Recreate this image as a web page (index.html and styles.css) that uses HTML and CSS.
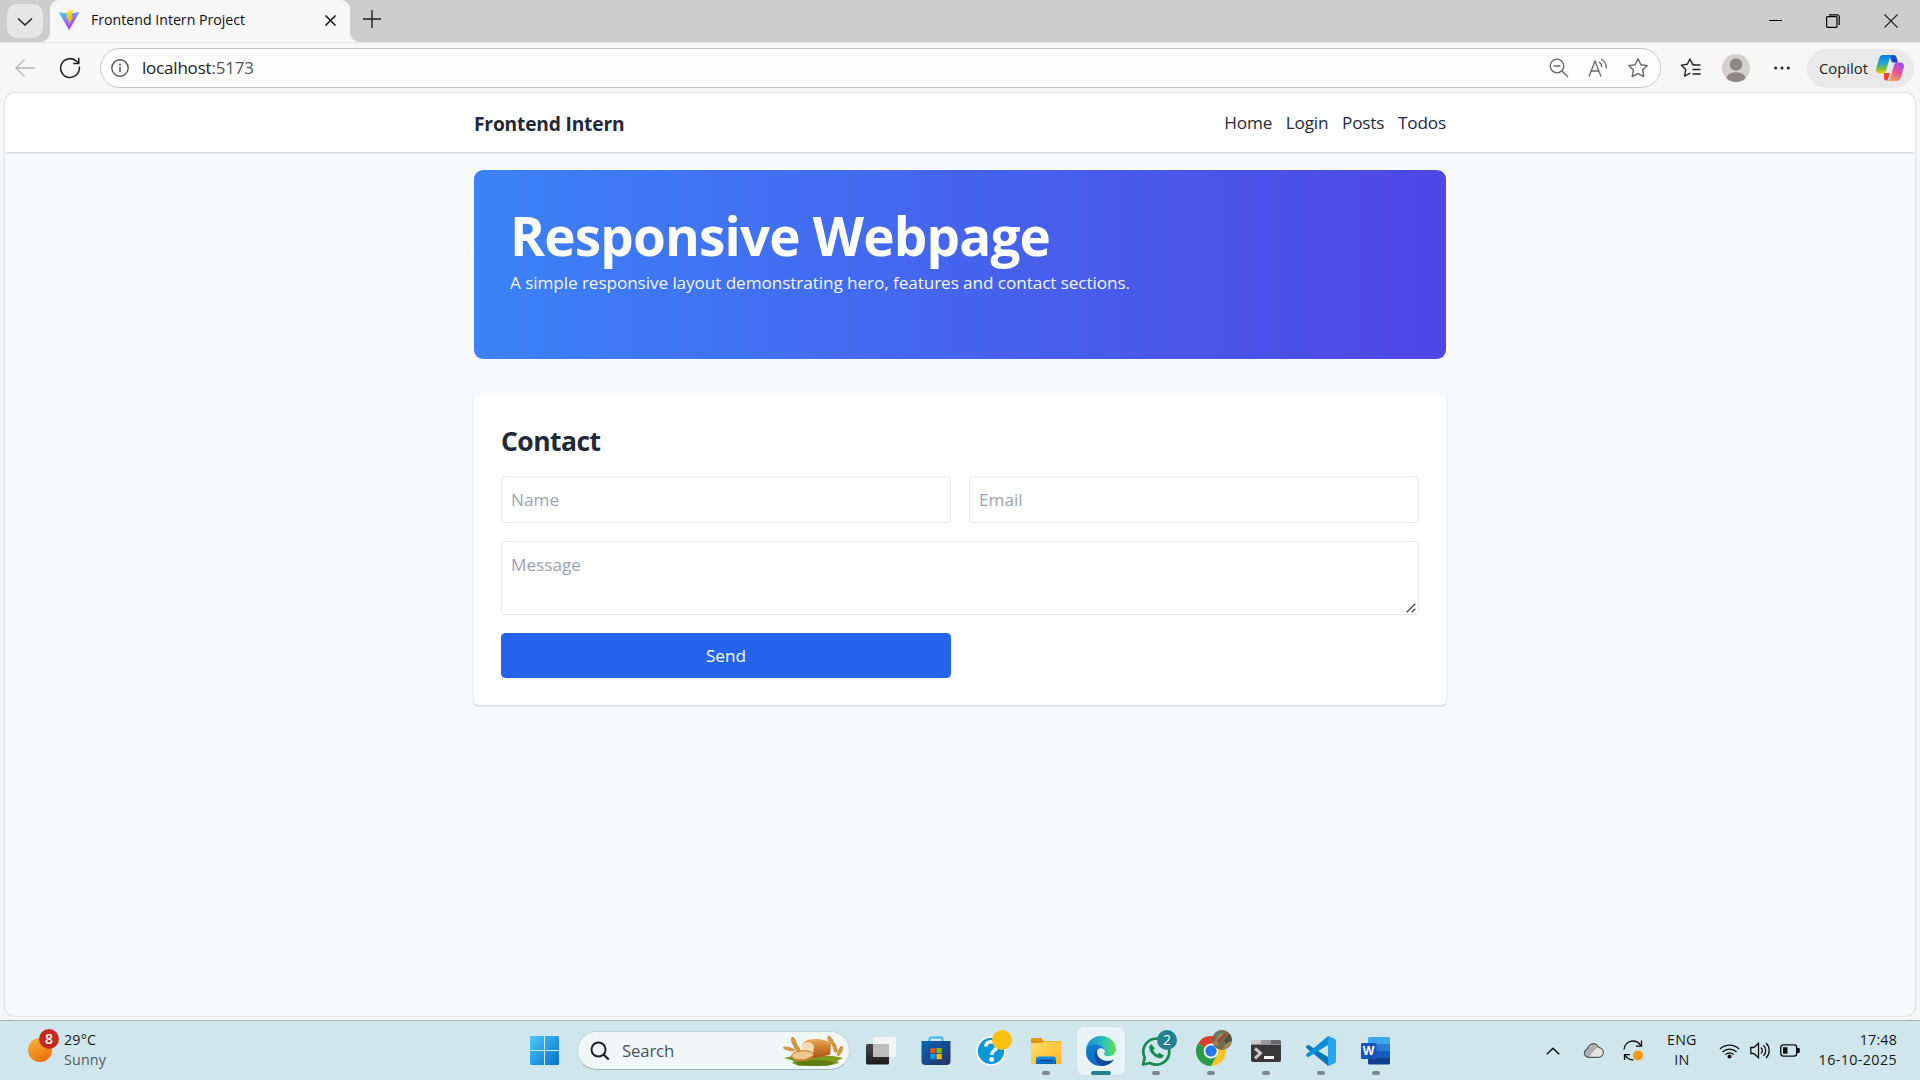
FILE: index.html
```html
<!DOCTYPE html>
<html lang="en">
<head>
<meta charset="utf-8">
<title>Frontend Intern Project</title>
<link rel="stylesheet" href="styles.css">
</head>
<body>
<div class="screen">
  <div class="tabstrip">
    <button class="tab-menu"><svg width="16" height="10" viewBox="0 0 16 10"><path d="M1 1.5l7 6.5 7-6.5" fill="none" stroke="#222" stroke-width="1.6"/></svg></button>
    <div class="tab">
      <svg class="vite" width="20" height="20" viewBox="0 0 32 32">
        <defs>
          <linearGradient id="va" x1="0" y1="0" x2=".6" y2="1"><stop offset="0" stop-color="#41d1ff"/><stop offset="1" stop-color="#bd34fe"/></linearGradient>
          <linearGradient id="vb" x1=".4" y1="0" x2=".6" y2="1"><stop offset="0" stop-color="#ffdf30"/><stop offset="1" stop-color="#ffa800"/></linearGradient>
        </defs>
        <path d="M31.7 4.6L17 31c-.3.6-1.100.6-1.400 0L.2 4.600c-.3-.6.2-1.300.9-1.200l14.900 2.600 14.800-2.600c.7-.1 1.200.6.9 1.200z" fill="url(#va)"/>
        <path d="M23 .2L12.500 2.300l-.6 11.500 3.200-.7-1 4.600 2.200-.6-1.500 7.200 8.300-13.800-3.300.7z" fill="url(#vb)"/>
      </svg>
      <span class="tab-title">Frontend Intern Project</span>
      <svg class="tab-close" width="11" height="11" viewBox="0 0 11 11"><path d="M.5.5l10 10M10.500.5l-10 10" stroke="#111" stroke-width="1.500"/></svg>
    </div>
    <svg class="new-tab" width="18" height="18" viewBox="0 0 18 18"><path d="M9 0v18M0 9h18" stroke="#222" stroke-width="1.400"/></svg>
    <div class="window-buttons">
      <span><svg width="13" height="13" viewBox="0 0 13 13"><path d="M0 5.500h13" stroke="#000" stroke-width="1"/></svg></span>
      <span><svg width="14" height="14" viewBox="0 0 14 14" fill="none" stroke="#000" stroke-width="1.200"><rect x=".6" y="2.600" width="10.400" height="10.800" rx="1"/><path d="M3 .8h8.200a2 2 0 0 1 2 2V11"/></svg></span>
      <span><svg width="14" height="14" viewBox="0 0 14 14"><path d="M.5.5l13 13M13.500.5l-13 13" stroke="#222" stroke-width="1.100"/></svg></span>
    </div>
  </div>

  <div class="toolbar">
    <svg class="back" width="20" height="18" viewBox="0 0 20 18"><path d="M9.500.5L1 9l8.500 8.500M1 9h19" fill="none" stroke="#b8b8b8" stroke-width="1.300"/></svg>
    <svg class="reload" width="22" height="22" viewBox="0 0 22 22"><path d="M20.300 9.500A9.400 9.400 0 1 1 17 3.800L19.500 6M19.800 1v5.400h-5.600" fill="none" stroke="#222" stroke-width="1.500"/></svg>
    <div class="address">
      <svg class="info" width="18" height="18" viewBox="0 0 18 18"><circle cx="9" cy="9" r="8.200" fill="none" stroke="#555" stroke-width="1.400"/><path d="M9 8v5" stroke="#444" stroke-width="1.400"/><circle cx="9" cy="5.400" r="1" fill="#444"/></svg>
      <span class="url"><span>localhost</span><span class="port">:5173</span></span>
      <svg class="a-icon" width="20" height="20" viewBox="0 0 20 20" fill="none" stroke="#666" stroke-width="1.300"><circle cx="8" cy="8" r="6.800"/><path d="M13 13l6 6M4.500 8h7"/></svg>
      <svg class="a-icon" width="20" height="20" viewBox="0 0 20 20" fill="none" stroke="#666" stroke-width="1.300"><path d="M1 18.500L7 3l6 15.500M3.200 13h7.700M11 4c1.800 1 2.700 2.600 2.700 5M13 1c3.600 1.800 5.400 5 5.400 9.500"/></svg>
      <svg class="a-icon" width="22" height="22" viewBox="0 0 22 22" fill="none" stroke="#666" stroke-width="1.400" stroke-linejoin="round"><path d="M11 1.800l2.900 5.900 6.400.9-4.700 4.500 1.200 6.500-5.800-3-5.800 3 1.200-6.500L1.700 8.600l6.400-.9z"/></svg>
    </div>
    <svg class="favs" width="21" height="20" viewBox="0 0 21 20" fill="none" stroke="#222" stroke-width="1.400" stroke-linejoin="round"><path d="M14.500 6.500l-2-.300L9.900 1 7.300 6.300l-6 .8 4.400 4.300-1.100 6.700 5.600-2.900M12.500 7h8M12.500 11.500h8M12.500 16h8"/></svg>
    <svg class="profile" width="28" height="28" viewBox="0 0 28 28"><defs><clipPath id="pc"><circle cx="14" cy="14" r="14"/></clipPath></defs><g clip-path="url(#pc)"><rect width="28" height="28" fill="#d3d1ce"/><circle cx="14" cy="10.500" r="6.200" fill="#8d8884"/><ellipse cx="14" cy="25" rx="10" ry="6.800" fill="#8d8884"/></g></svg>
    <svg class="more" width="16" height="4" viewBox="0 0 16 4" fill="#222"><circle cx="1.700" cy="2" r="1.500"/><circle cx="8" cy="2" r="1.500"/><circle cx="14.300" cy="2" r="1.500"/></svg>
    <div class="copilot"><span class="copilot-label">Copilot</span>
      <svg width="28" height="26" viewBox="0 0 28 26">
        <defs>
          <linearGradient id="ca" x1="0" y1="0" x2="0" y2="1"><stop offset="0" stop-color="#0a7be8"/><stop offset=".4" stop-color="#19a5d6"/><stop offset=".75" stop-color="#7fbb3c"/><stop offset="1" stop-color="#fbd000"/></linearGradient>
          <linearGradient id="cb" x1=".7" y1="0" x2=".3" y2="1"><stop offset="0" stop-color="#9a4cf5"/><stop offset=".5" stop-color="#f0559a"/><stop offset="1" stop-color="#ffa35c"/></linearGradient>
          <linearGradient id="cc" x1="0" y1="0" x2="1" y2="1"><stop offset="0" stop-color="#1667e0"/><stop offset="1" stop-color="#1b33b5"/></linearGradient>
        </defs>
        <path d="M8 18h6l-2.500 7.500c-2 .5-3-.5-3.600-2.500z" fill="#f0452c"/>
        <path d="M13 0h4.500c2 0 2.700 1.300 3.200 3L22 7.500h-6z" fill="url(#cc)"/>
        <path d="M7 0h9.500c-2 .5-2.600 2.500-3.200 4.500l-3.200 11C9.300 18 8.300 18.500 6 18.500H3.500C.5 18.500-.5 16 .3 13L3 4C3.800 1.300 5 0 7 0z" fill="url(#ca)"/>
        <path d="M21 26h-9.500c2-.5 2.600-2.500 3.200-4.500l3.200-11C18.700 8 19.700 7.500 22 7.500h2.500c3 0 4 2.500 3.200 5.500L25 22c-.8 2.700-2 4-4 4z" fill="url(#cb)"/>
      </svg>
    </div>
  </div>

  <div class="viewport">
    <header class="site-header">
      <div class="container header-row">
        <h1 class="brand">Frontend Intern</h1>
        <nav class="nav"><a>Home</a><a>Login</a><a>Posts</a><a>Todos</a></nav>
      </div>
    </header>
    <main class="container main">
      <section class="hero">
        <h2 class="hero-title">Responsive Webpage</h2>
        <p class="hero-text">A simple responsive layout demonstrating hero, features and contact sections.</p>
      </section>
      <section class="card">
        <h3 class="card-title">Contact</h3>
        <form class="form">
          <input class="field" placeholder="Name">
          <input class="field" placeholder="Email">
          <div class="message-wrap">
            <textarea class="field message" placeholder="Message"></textarea>
            <svg class="grip" width="10" height="10" viewBox="0 0 10 10"><path d="M.7 9.300L9.300.7M5.700 9.300l3.600-3.600" stroke="#444" stroke-width="1.300"/></svg>
          </div>
          <button type="button" class="send">Send</button>
        </form>
      </section>
    </main>
  </div>

  <div class="taskbar">
    <div class="weather">
      <div class="sun"><span class="badge red">8</span></div>
      <div class="two-line"><span>29°C</span><span class="dim">Sunny</span></div>
    </div>
    <div class="slot"><svg width="29" height="29" viewBox="0 0 29 29"><defs><linearGradient id="wg" x1="0" y1="0" x2="1" y2="1"><stop offset="0" stop-color="#4cc8fa"/><stop offset="1" stop-color="#0670cf"/></linearGradient></defs><path d="M1 0h13v14H0V1a1 1 0 0 1 1-1zM15 0h13a1 1 0 0 1 1 1v13H15zM0 15h14v14H1a1 1 0 0 1-1-1zM15 15h14v13a1 1 0 0 1-1 1H15z" fill="url(#wg)"/></svg></div>
    <div class="search">
      <svg width="20" height="20" viewBox="0 0 20 20" fill="none" stroke="#222" stroke-width="2"><circle cx="8.500" cy="8.500" r="7"/><path d="M13.500 13.500l5.200 5" stroke-width="2.400"/></svg>
      <span class="search-label">Search</span>
      <svg class="bread" width="62" height="32" viewBox="0 0 62 32">
        <defs><linearGradient id="br" x1="0" y1="0" x2="0" y2="1"><stop offset="0" stop-color="#e9ab5b"/><stop offset=".45" stop-color="#d07f2e"/><stop offset="1" stop-color="#a65313"/></linearGradient></defs>
        <path d="M2 23l9-2 40 0 10 2-6 3 2 2-12 3H17l-7-3 2-2z" fill="#7c9a1d"/><ellipse cx="33" cy="28" rx="19" ry="3" fill="#5f7d10"/>
        <g fill="#d79a3c" stroke="#b87725" stroke-width=".5"><ellipse cx="12" cy="7" rx="2" ry="5" transform="rotate(-22 12 7)"/><ellipse cx="7" cy="14" rx="1.500" ry="6" transform="rotate(-75 7 14)"/><ellipse cx="15" cy="13" rx="2" ry="4.500" transform="rotate(-35 15 13)"/><ellipse cx="49" cy="6" rx="2" ry="5.500" transform="rotate(-30 49 6)"/><ellipse cx="53" cy="13" rx="1.800" ry="4.500" transform="rotate(-12 53 13)"/><ellipse cx="58" cy="16" rx="1.800" ry="5" transform="rotate(25 58 16)"/></g>
        <path d="M20 10c1-4 7-6 14-6s15 2 15 7l-1 9-17 3-10-3z" fill="url(#br)"/>
        <path d="M20 10c1-4 10-4 11.500 0 1 3-.5 5-.5 12l-10-3c0-5-2-6-1-9z" fill="#f6dcae"/>
        <path d="M10 20c1-3 9-5 15-4 5 1 7 2 6 5l-10 5c-6 0-13-3-11-6z" fill="#edc78b" stroke="#bd732c"/><path d="M13 25l12 0 6-3" fill="none" stroke="#c67a30" stroke-width="1.500"/>
      </svg>
    </div>
    <div class="slot"><svg width="30" height="30" viewBox="0 0 30 30"><defs><linearGradient id="tv" x1="0" y1="0" x2="0" y2="1"><stop offset="0" stop-color="#484848"/><stop offset="1" stop-color="#1c1c1c"/></linearGradient></defs><rect y="8" width="23" height="20.500" rx="1.500" fill="url(#tv)"/><rect x="7" y="1" width="23" height="20" rx="1.200" fill="#f4f4f4"/><path d="M7 8h16v13H8.200A1.200 1.200 0 0 1 7 19.800z" fill="#bcbdbd"/></svg></div>
    <div class="slot"><svg width="30" height="30" viewBox="0 0 30 30"><defs><linearGradient id="st" x1="0" y1="0" x2="1" y2="1"><stop offset="0" stop-color="#0566ba"/><stop offset="1" stop-color="#27335f"/></linearGradient></defs><path d="M8.500 6V3a1.500 1.500 0 0 1 1.500-1.500h10A1.500 1.500 0 0 1 21.500 3v3" fill="none" stroke="#2bb8ef" stroke-width="1.800"/><path d="M.5 5h29v20a4 4 0 0 1-4 4h-21a4 4 0 0 1-4-4z" fill="url(#st)"/><path fill="#f25022" d="M9.300 12h5.200v5.200H9.300z"/><path fill="#7fba00" d="M15.500 12h5.200v5.200h-5.200z"/><path fill="#00a4ef" d="M9.300 18h5.200v5.200H9.300z"/><path fill="#ffb900" d="M15.500 18h5.200v5.200h-5.200z"/></svg></div>
    <div class="slot"><svg width="30" height="30" viewBox="0 0 30 30"><circle cx="15" cy="15" r="14" fill="#0c98d8" stroke="#fff" stroke-width="1.700"/><path d="M9.800 10.500c.2-3 2.400-4.700 5.500-4.700s5.500 1.600 5.500 4.500c0 2.300-1.300 3.300-3 4.600-1.500 1.200-2 2-2 4" fill="none" stroke="#fff" stroke-width="3.600"/><circle cx="15.700" cy="23.500" r="2.400" fill="#fff"/></svg><span class="badge yellow"></span></div>
    <div class="slot"><svg width="30" height="30" viewBox="0 0 30 30"><defs><linearGradient id="fo" x1="0" y1="0" x2="1" y2="1"><stop offset="0" stop-color="#ffdc67"/><stop offset="1" stop-color="#fcb822"/></linearGradient><linearGradient id="fb" x1="0" y1="0" x2="0" y2="1"><stop offset="0" stop-color="#1c8de4"/><stop offset="1" stop-color="#0864b8"/></linearGradient></defs><path d="M0 3.500C0 2.500.6 2 1.500 2H10l3 3h15.500c1 0 1.500.500 1.500 1.500V12H0z" fill="#dc9800"/><path d="M0 7h10.500L13 5.500h15.500A1.500 1.500 0 0 1 30 7v21H0z" fill="url(#fo)"/><path d="M5 28v-4.500a3 3 0 0 1 3-3h14a3 3 0 0 1 3 3V28z" fill="url(#fb)"/><path d="M8.500 24.500h13" stroke="#06478e" stroke-width="1.300"/></svg><i class="run"></i></div>
    <div class="slot active"><svg width="30" height="30" viewBox="0 0 30 30">
      <defs><linearGradient id="e1" x1="0" y1=".5" x2="1" y2=".5"><stop offset="0" stop-color="#188bd0"/><stop offset=".5" stop-color="#27b8c8"/><stop offset="1" stop-color="#66e04f"/></linearGradient><linearGradient id="e2" x1="0" y1="0" x2=".3" y2="1"><stop offset="0" stop-color="#1380d2"/><stop offset="1" stop-color="#1069c5"/></linearGradient></defs>
      <path d="M0 14C.5 6 7 0 15 0c8.500 0 15 6 15 13 0 4.500-3.200 7.300-7.500 7.300-3 0-4.500-1-4.500-2.200 0-.8.900-1.300.9-3 0-3-3.200-6-8-6-5 0-9 2-10.900 4.900z" fill="url(#e1)"/>
      <path d="M0 15C1 10 5 8.500 9.500 8.500c5 0 9 2.400 9.400 6.200-1-2-2.500-2.500-4-2.500-3 0-5 3-3.900 7 1.300 4.800 6 7.300 11 6.800l4-1c-3 3.500-7 5-11 5C6 30-.5 23 0 15z" fill="url(#e2)"/>
      <path d="M11.500 13.500C8 16 7.500 20.500 10 24.500c2 3.300 4.500 5.200 7 5.400 4.500-.3 8-2.200 10.500-5.600.3-.5 0-.9-.6-.6-1.500.8-3.400 1.200-5.400 1.200-5.500 0-10.500-4-10.500-8.500 0-1 .1-2 .5-2.900z" fill="#114a96"/>
    </svg><i class="run on"></i></div>
    <div class="slot"><svg width="30" height="30" viewBox="0 0 30 30" fill="none" stroke="#16894e"><path d="M2 28.500l1.700-7A13 13 0 1 1 9 27z" stroke-width="2.700" stroke-linejoin="round"/><path d="M10.500 8.500c-1.500.5-2.500 2-2 4 1 4.500 5 8.500 10 9.500 2 .4 3.500-.5 4-2.500l-4-2.500-2 1.600c-2-.8-3.500-2.400-4.400-4.400l1.400-2z" fill="#16894e" stroke-width=".4" stroke-linejoin="round"/></svg><span class="badge teal">2</span><i class="run"></i></div>
    <div class="slot"><svg width="30" height="30" viewBox="0 0 30 30"><path d="M15 15L2 7.500A15 15 0 0 1 28 7.500H15z" fill="#e33b2e"/><path d="M15 15L2 7.500A15 15 0 0 0 15 30l6.500-11.200z" fill="#289b48"/><path d="M15 7.500h13A15 15 0 0 1 15 30l6.500-11.200z" fill="#fcc521"/><circle cx="15" cy="15" r="7.400" fill="#fff"/><circle cx="15" cy="15" r="5.700" fill="#2478eb"/></svg>
      <span class="badge photo"><svg width="20" height="20" viewBox="0 0 20 20"><path d="M0 0h20v20H0z" fill="#77694a"/><path d="M0 3l9-3 5 5-8 4z" fill="#67796b"/><path d="M1 14L8 3l3 1-5 12zM10 19l7-9 3 2-6 8z" fill="#9f8757"/><path d="M5 10l8-7 2 2-9 9z" fill="#96503f"/><path d="M12 10l7-7 1 7-6 4z" fill="#4e5137"/></svg></span><i class="run"></i></div>
    <div class="slot"><svg width="30" height="30" viewBox="0 0 30 30"><path d="M0 8.500h30V24a2 2 0 0 1-2 2H2a2 2 0 0 1-2-2z" fill="#383838"/><path d="M1.500 4H10v4H0V5.500C0 4.600.6 4 1.500 4z" fill="#cacaca"/><path d="M10 4h10v4H10z" fill="#999"/><path d="M20 4h8.500c.9 0 1.500.6 1.500 1.500V8H20z" fill="#686868"/><path d="M4 12.500l5.500 4.500L4 22.500" fill="none" stroke="#c8c8c8" stroke-width="3"/><path d="M13 21.500h10" stroke="#f3f3f3" stroke-width="3"/></svg><i class="run"></i></div>
    <div class="slot"><svg width="30" height="30" viewBox="0 0 30 30"><path d="M1.500 9.200L.4 10.200c-.5.500-.5 1.300 0 1.800L22 29.800V21L3 9.200c-.5-.4-1.100-.4-1.500 0z" fill="#0876b9"/><path d="M1.500 20.800L.4 19.800c-.5-.5-.5-1.300 0-1.800L22 .2V9L3 20.800c-.5.4-1.100.4-1.500 0z" fill="#0891d8"/><path d="M21.500 29.800c.6.300 1 .2 1.500 0l6-2.800c.6-.3 1-.9 1-1.600V4.600c0-.7-.4-1.300-1-1.600L23 .2c-.6-.3-1.300-.2-1.800.4l.8.700v27.400z" fill="#25a5f2"/></svg><i class="run"></i></div>
    <div class="slot"><svg width="30" height="30" viewBox="0 0 30 30"><path d="M7 2.500A1.500 1.500 0 0 1 8.500 1h19A1.500 1.500 0 0 1 29 2.500V8H7z" fill="#41a5ee"/><path d="M7 8h22v7H7z" fill="#2b7cd3"/><path d="M7 15h22v7H7z" fill="#185abd"/><path d="M7 22h22v5a1.500 1.500 0 0 1-1.500 1.500h-19A1.500 1.500 0 0 1 7 27z" fill="#103f91"/><rect y="7" width="15.500" height="16" rx="1.300" fill="#1856b5"/></svg><b class="word-letter">W</b><i class="run"></i></div>
    <div class="tray">
      <svg width="14" height="8" viewBox="0 0 14 8"><path d="M.8 7.200L7 1.200l6.200 6" fill="none" stroke="#111" stroke-width="1.500"/></svg>
      <svg class="cloud" width="21" height="15" viewBox="0 0 21 15"><path d="M5 14.300a4.300 4.300 0 0 1-.6-8.400C5.300 2.500 7.600.7 10.300.7c2.500 0 4.600 1.200 5.600 3.800 2.700.3 4.400 2.300 4.400 4.900 0 2.900-2 4.900-4.800 4.900z" fill="#e4e4e4"/><path d="M4.400 5.900C5.300 2.500 7.600.7 10.300.7c2.500 0 4.600 1.200 5.600 3.800-3 .3-5 3-9.900 9.600A4.300 4.300 0 0 1 4.400 5.900z" fill="#aeb0b0"/><path d="M5 14.300a4.300 4.300 0 0 1-.6-8.400C5.300 2.500 7.600.7 10.300.7c2.500 0 4.600 1.200 5.600 3.800 2.700.3 4.400 2.300 4.400 4.900 0 2.900-2 4.900-4.800 4.900z" fill="none" stroke="#333" stroke-width="1"/></svg>
      <svg class="sync" width="20" height="21" viewBox="0 0 20 21"><path d="M1 9.500C1.500 4.500 5 1 9.800 1c3.500 0 6.300 1.700 8 4.700M18.500.5v5.700h-5.500M1.500 20v-5.300H7M2 15.300c2 3 4.500 4.500 8.500 4.500" fill="none" stroke="#111" stroke-width="1.300"/><circle cx="15" cy="15.500" r="5" fill="#fd9807"/></svg>
      <div class="two-line lang"><span>ENG</span><span>IN</span></div>
      <svg class="wifi" width="21" height="16" viewBox="0 0 21 16" fill="none" stroke="#111" stroke-width="1.300"><path d="M1 6a13.500 13.500 0 0 1 19 0M3.500 9a10 10 0 0 1 14 0M6.300 11.600a6 6 0 0 1 8.400 0"/><circle cx="10.500" cy="13.500" r="1.400" fill="#111"/></svg>
      <svg class="volume" width="20" height="17" viewBox="0 0 20 17" fill="none" stroke="#111" stroke-width="1.300"><path d="M.8 5.500h3L8.500 1.200v14.600l-4.700-4.300h-3zM11 5.500a4.200 4.200 0 0 1 0 6M13.500 3.300a7.300 7.300 0 0 1 0 10.400M16 1a10.400 10.400 0 0 1 0 15"/></svg>
      <svg class="battery" width="20" height="13" viewBox="0 0 20 13"><rect x=".7" y=".9" width="16" height="11.200" rx="2.500" fill="none" stroke="#111" stroke-width="1.400"/><path d="M3 3.200h4.500v6.600H3zM17 4h1.800a1 1 0 0 1 1 1v3a1 1 0 0 1-1 1H17z" fill="#111"/></svg>
      <div class="two-line clock"><span>17:48</span><span class="date">16-10-2025</span></div>
    </div>
  </div>
</div>
</body>
</html>
```
FILE: styles.css
```css
* { box-sizing: border-box; }

body {
  margin: 0;
  font-family: "Open Sans", "Noto Sans", sans-serif;
  color: #1f2937;
}

h1, h2, h3, p { margin: 0; }
svg { display: block; flex: none; }

.screen {
  width: 1920px;
  height: 1080px;
  overflow: hidden;
  display: flex;
  flex-direction: column;
  background: #f7f7f7;
}

/* Browser tab strip */
.tabstrip {
  height: 42px;
  flex: none;
  display: flex;
  align-items: flex-start;
  background: #cdcdcd;
}
.tab-menu {
  width: 36px;
  height: 34px;
  margin: 4px 7px 0;
  padding: 2px 0 0;
  border: 0;
  border-radius: 10px;
  background: #e6e6e6;
  display: flex;
  align-items: center;
  justify-content: center;
}
.tab {
  position: relative;
  width: 300px;
  height: 42px;
  padding: 0 14px 2px 9px;
  display: flex;
  align-items: center;
  background: #f7f7f7;
  border-radius: 9px 9px 0 0;
}
.tab::before, .tab::after {
  content: "";
  position: absolute;
  bottom: 0;
  width: 9px;
  height: 9px;
}
.tab::before { left: -9px; background: radial-gradient(circle at 0 0, #cdcdcd 8.500px, #f7f7f7 9px); }
.tab::after { right: -9px; background: radial-gradient(circle at 100% 0, #cdcdcd 8.500px, #f7f7f7 9px); }
.tab-title { margin-left: 12px; padding-bottom: 2px; font-size: 14.200px; letter-spacing: -.02px; color: #111; white-space: nowrap; }
.tab-close { margin-left: auto; }
.new-tab { margin: 10px 0 0 13px; }
.window-buttons { margin-left: auto; display: flex; height: 42px; }
.window-buttons span { width: 58px; display: flex; align-items: center; justify-content: center; }

/* Browser toolbar */
.toolbar {
  height: 51px;
  flex: none;
  display: flex;
  align-items: center;
  border-top: 1px solid #e6e6e6;
  padding: 0 6px 0 15px;
}
.reload { margin-left: 24px; }
.address {
  width: 1561px;
  height: 40px;
  margin-left: 19px;
  padding: 0 11px 0 10px;
  display: flex;
  align-items: center;
  border: 1px solid #c9c9c9;
  border-radius: 20px;
  background: #fdfdfd;
}
.url { margin: 0 auto 0 13px; padding-bottom: 2px; font-size: 17px; letter-spacing: -.2px; color: #222; }
.port { color: #555; }
.a-icon { margin-left: 19px; }
.favs { margin-left: 19px; }
.profile { margin-left: 21px; }
.more { margin-left: 24px; }
.copilot {
  width: 107px;
  height: 39px;
  margin-left: auto;
  padding: 0 10px 0 12px;
  display: flex;
  align-items: center;
  justify-content: space-between;
  border-radius: 20px;
  background: #e9e9e9;
  font-size: 14.800px;
  color: #222;
}
.copilot-label { padding-bottom: 1px; }

/* Page */
.viewport {
  height: 923px;
  flex: none;
  margin: 0 5px;
  border-radius: 10px;
  background: #f9fafb;
  box-shadow: 0 0 2px rgba(0, 0, 0, .28);
  overflow: hidden;
}
.container { width: 972px; margin: 0 auto; }
.site-header {
  height: 59px;
  background: #fff;
  box-shadow: 0 1px 3px rgba(0, 0, 0, .1), 0 1px 2px rgba(0, 0, 0, .1);
}
.header-row { height: 59px; display: flex; align-items: center; justify-content: space-between; }
.brand { font-size: 19.200px; letter-spacing: -.18px; font-weight: 700; line-height: 28px; padding-top: 2px; }
.nav { display: flex; gap: 13.500px; font-size: 17.200px; letter-spacing: -.15px; line-height: 27px; }
.main { padding-top: 18px; display: flex; flex-direction: column; gap: 36px; }
.hero {
  height: 189px;
  padding: 39px 36px 36px;
  border-radius: 9px;
  background: linear-gradient(to right, #3b82f6, #4f46e5);
  color: #fff;
}
.hero-title { font-size: 53px; letter-spacing: -.8px; line-height: 54px; white-space: nowrap; }
.hero-text { margin-top: 6px; font-size: 17.200px; letter-spacing: -.093px; line-height: 27px; white-space: nowrap; color: #f3f6ff; }
.card {
  height: 310px;
  padding: 28px 27px 27px;
  border-radius: 4.500px;
  background: #fff;
  box-shadow: 0 1px 3px rgba(0, 0, 0, .1), 0 1px 2px rgba(0, 0, 0, .1);
}
.card-title { font-size: 26.500px; letter-spacing: -.55px; line-height: 36px; margin-bottom: 17px; }
.form { display: grid; grid-template-columns: 1fr 1fr; gap: 18px; }
.field {
  height: 47px;
  min-width: 0;
  padding: 9px;
  border: 1px solid #e5e7eb;
  border-radius: 4.500px;
  background: #fff;
  font: 17.200px/27px "Open Sans", "Noto Sans", sans-serif;
  outline: 0;
}
.field::placeholder { color: #9ca3af; }
.message-wrap { grid-column: span 2; position: relative; height: 74px; }
.message { width: 100%; height: 74px; display: block; overflow: hidden; resize: none; }
.grip { position: absolute; right: 3px; bottom: 2px; }
.send {
  height: 45px;
  border: 0;
  border-radius: 4.500px;
  background: #2563eb;
  color: #fff;
  font: 17.200px/27px "Open Sans", "Noto Sans", sans-serif;
}

/* Taskbar */
.taskbar {
  height: 60px;
  margin-top: auto;
  flex: none;
  display: flex;
  align-items: center;
  background: #cfe7ec;
  border-top: 1px solid #a4b4bb;
}
.weather { width: 520px; padding-left: 28px; display: flex; align-items: center; }
.sun { position: relative; width: 24px; height: 24px; border-radius: 50%; background: linear-gradient(150deg, #f3bb35, #ee6208); margin: -2px 12px 0 0; }
.two-line { display: flex; flex-direction: column; padding-bottom: 2px; font-size: 14.300px; letter-spacing: .15px; line-height: 20px; color: #181818; white-space: nowrap; }
.dim { color: #4f5b5e; }
.badge {
  position: absolute;
  width: 20px;
  height: 20px;
  border-radius: 50%;
  overflow: hidden;
  font-size: 14px;
  line-height: 20px;
  text-align: center;
  color: #fff;
}
.red { left: 11px; top: -9px; background: #c42b1c; font-weight: 600; }
.slot { position: relative; width: 48px; height: 48px; margin-right: 7px; display: flex; align-items: center; justify-content: center; border-radius: 6px; flex: none; }
.slot .badge { right: 3px; top: 3px; }
.yellow { background: #fdbf10; }
.teal { background: #24808f; }
.active { background: #e6f3f7; box-shadow: 0 0 1px rgba(0, 0, 0, .2); }
.run { position: absolute; left: 20px; bottom: 0; width: 8px; height: 4px; border-radius: 2px; background: #7d898c; }
.on { left: 14px; width: 20px; background: #24808f; }
.word-letter { position: absolute; left: 9px; top: 16px; width: 15px; font: 700 12px/16px "Open Sans", sans-serif; text-align: center; color: #fff; }
.search {
  width: 273px;
  height: 39px;
  margin: 0 7px 0 2px;
  padding: 0 5px 0 12px;
  display: flex;
  align-items: center;
  border: 1px solid #c0d7dc;
  border-bottom-color: #a3b6bc;
  border-radius: 20px;
  background: #f0f7f9;
}
.search-label { margin-left: 12px; font-size: 16.800px; letter-spacing: -.19px; color: #4b5052; }
.bread { margin-left: auto; }
.tray { margin-left: auto; padding-right: 23px; display: flex; align-items: center; }
.cloud { margin-left: 23px; }
.sync { margin-left: 19px; }
.lang { align-items: center; margin-left: 24px; }
.wifi { margin-left: 22px; }
.volume { margin-left: 10px; }
.battery { margin-left: 10px; }
.clock { align-items: flex-end; margin-left: 19px; }
.date { letter-spacing: .38px; }
```
